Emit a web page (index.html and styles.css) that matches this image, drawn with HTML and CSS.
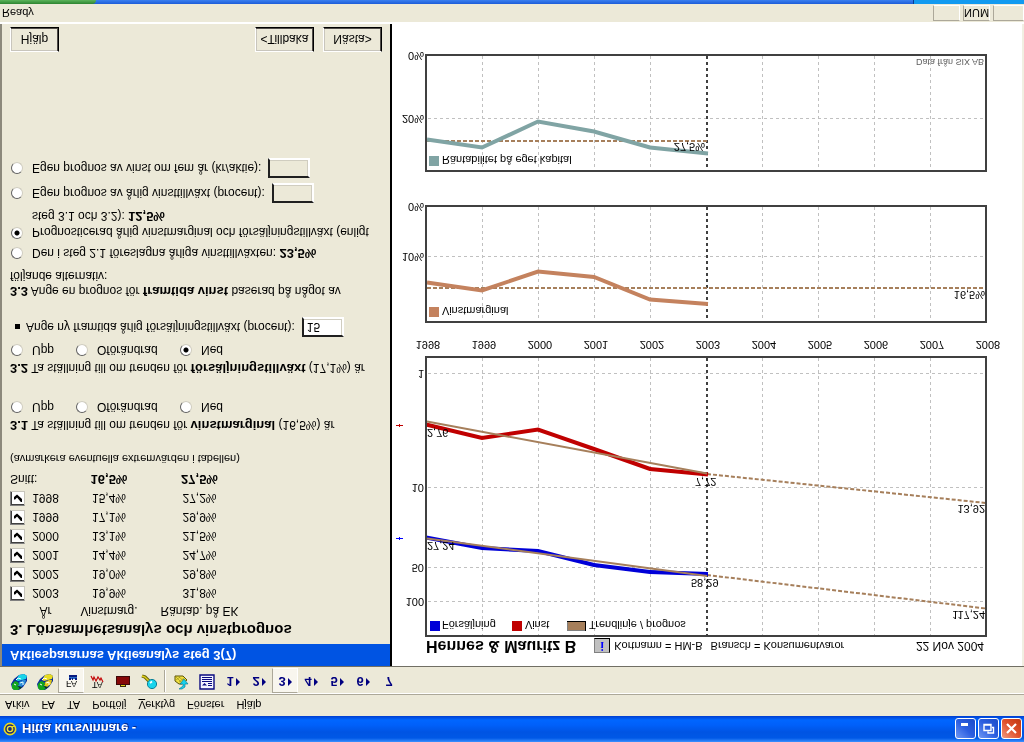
FILE: index.html
```html
<!DOCTYPE html>
<html lang="sv">
<head>
<meta charset="utf-8">
<title>Hitta kursvinnare</title>
<link rel="stylesheet" href="styles.css">
</head>
<body>
<div class="window">
  <header class="titlebar">
    <svg class="app-icon" viewBox="0 0 14 14" width="14" height="14" aria-hidden="true">
      <circle cx="7" cy="7" r="5.6" fill="#1a2a70" stroke="#e8d820" stroke-width="1.6"/>
      <circle cx="7" cy="7" r="2.6" fill="none" stroke="#f4e838" stroke-width="1.4"/>
      <path d="M9.5 5v4.5h3" fill="none" stroke="#e8d820" stroke-width="1.2"/>
    </svg>
    <h1 class="title">Hitta kursvinnare -</h1>
    <div class="window-buttons">
      <button class="winbtn" aria-label="Minimera"><svg viewBox="0 0 17 17"><path d="M4 11h7v3H4z" fill="#fff"/></svg></button>
      <button class="winbtn" aria-label="Återställ"><svg viewBox="0 0 17 17"><path d="M4 6.500h7v6H4zM4 12h7M12 9.500h1.500V4H8v1.500" fill="none" stroke="#fff" stroke-width="1.4"/></svg></button>
      <button class="winbtn close" aria-label="Stäng"><svg viewBox="0 0 17 17"><path d="M4 4l9 9M13 4l-9 9" stroke="#fff" stroke-width="2.2"/></svg></button>
    </div>
  </header>

  <nav class="menubar">
    <a href="#arkiv">Arkiv</a><a href="#fa">FA</a><a href="#ta">TA</a><a href="#portfolj">Portfölj</a><a href="#verktyg"><u>V</u>erktyg</a><a href="#fonster">Fönster</a><a href="#hjalp">Hjälp</a>
  </nav>

  <div class="toolbar">
    <button class="tool" aria-label="Hämta kurser"><svg viewBox="0 0 16 16">
      <path d="M3 16H8L12 13 16 7V2L13 0 8 1 3 5 0 10 1 14z" transform="matrix(1 0 0 -1 0 16)" fill="#0a2c9c"/>
      <path d="M8 15l5 1 3-2-1-3-4-1-4-1-2 1z" fill="#19d4e8"/>
      <path d="M12 10h3l-1-4-4-3-3 1 1 4z" fill="#2a8cd8"/>
      <path d="M1 6l3 3 3-1 1-3-2-1 3-2-2-2H3L1 2z" fill="#12a51c"/>
      <path d="M9 7l3 1V5M5 10l2 2 3-1M3 6l2-1" stroke="#e8ffff" fill="none"/>
      <path d="M7 4l4-1-2-2z" fill="#063c14"/>
    </svg></button>
    <button class="tool" aria-label="Hämta nyheter"><svg viewBox="0 0 16 16">
      <path d="M3 16H8L12 13 16 7V2L13 0 8 1 3 5 0 10 1 14z" transform="matrix(1 0 0 -1 0 16)" fill="#0a2c9c"/>
      <path d="M8 15l5 1 3-2-1-3-4-1-4-1-2 1z" fill="#e8dc20"/>
      <path d="M12 10h3l-1-4-4-3-3 1 1 4z" fill="#e0c818"/>
      <path d="M1 6l3 3 3-1 1-3-2-1 3-2-2-2H3L1 2z" fill="#12a51c"/>
      <path d="M9 7l3 1V5M5 10l2 2 3-1M3 6l2-1" stroke="#fffff0" fill="none"/>
      <path d="M7 4l4-1-2-2z" fill="#063c14"/>
    </svg></button>
    <button class="tool pressed" aria-label="FA"><svg viewBox="0 0 16 16">
      <text class="icon-text" x="3" y="9">FA</text>
      <path d="M6 11h8v4H6z" fill="#2a6cc8"/><path d="M6 13h8v2H6z" fill="#0a1c80"/><path d="M6 10h2v2H6zM9 10h1v2H9zM12 10h2v2h-2z" fill="#0a1c80"/>
    </svg></button>
    <button class="tool" aria-label="TA"><svg viewBox="0 0 16 16">
      <text class="icon-text" x="3" y="8">TA</text>
      <path d="M2 14l2-4 1 3 2-4 2 4 2-3 1 2 2-4" fill="none" stroke="#c40a0a" stroke-width="1.2"/>
    </svg></button>
    <button class="tool" aria-label="Bildskärm"><svg viewBox="0 0 16 16">
      <path d="M5 3h6v3H5z" fill="#3a2a08"/><path d="M6 4h4v1H6z" fill="#e2d21a"/>
      <path d="M1 5h14v9H1z" fill="#3c0a0a"/><path d="M2 6h12v7H2z" fill="#860808"/>
    </svg></button>
    <button class="tool" aria-label="Sök"><svg viewBox="0 0 16 16">
      <path d="M1 14l3-1 4-4" fill="none" stroke="#6a6410" stroke-width="3.4"/>
      <path d="M1 14l3-1 4-4" fill="none" stroke="#e2d21a" stroke-width="1.4"/>
      <circle cx="11" cy="6" r="4.6" fill="#18d4ec" stroke="#0a8098"/><path d="M9 7l2 1.500" stroke="#fff" stroke-width="1.6"/>
    </svg></button>
    <span class="tool-divider"></span>
    <button class="tool" aria-label="Anteckning"><svg viewBox="0 0 16 16">
      <path d="M2 14h8l4-4-5-4H6l-4 3z" fill="#f0e040" stroke="#5c5408"/>
      <path d="M3 13l6-6M6 13l6-5M3 10l4 3M6 8l5 4" stroke="#8e861c" stroke-width=".6"/>
      <path d="M6 1h3l3 2v3h3l-4 5-4-5h3V4z" fill="#18d0ec" stroke="#04708a" stroke-width=".6"/>
    </svg></button>
    <button class="tool" aria-label="Lista"><svg viewBox="0 0 16 16">
      <path d="M1 1h14v14H1z" fill="#f4f4ff" stroke="#0a0a80" stroke-width="1.4"/>
      <path d="M3 12.500h10M3 10.500h10M3 8.500h10M9 6.500h4M9 4.500h4" stroke="#0a0a80"/>
      <path d="M3 4.500h5L5.500 7z" fill="#0a0a80"/>
    </svg></button>
    <button class="tool step">1<i></i></button>
    <button class="tool step">2<i></i></button>
    <button class="tool step pressed">3<i></i></button>
    <button class="tool step">4<i></i></button>
    <button class="tool step">5<i></i></button>
    <button class="tool step">6<i></i></button>
    <button class="tool step">7</button>
  </div>

  <main class="workspace">
    <form class="panel">
      <h2 class="panel-title">Aktiespararnas Aktieanalys steg 3(7)</h2>
      <div class="panel-body">
        <h3 class="heading">3. Lönsamhetsanalys och vinstprognos</h3>
        <table class="years">
          <colgroup><col class="c-check"><col class="c-year"><col class="c-margin"><col class="c-return"></colgroup>
          <thead><tr><td></td><th>År</th><th>Vinstmarg.</th><th>Räntab. på EK</th></tr></thead>
          <tbody>
            <tr><td><input type="checkbox" class="check" id="y03" checked></td><td><label for="y03">2003</label></td><td>19,9%</td><td>31,8%</td></tr>
            <tr><td><input type="checkbox" class="check" id="y02" checked></td><td><label for="y02">2002</label></td><td>19,0%</td><td>29,8%</td></tr>
            <tr><td><input type="checkbox" class="check" id="y01" checked></td><td><label for="y01">2001</label></td><td>14,4%</td><td>24,7%</td></tr>
            <tr><td><input type="checkbox" class="check" id="y00" checked></td><td><label for="y00">2000</label></td><td>13,1%</td><td>21,5%</td></tr>
            <tr><td><input type="checkbox" class="check" id="y99" checked></td><td><label for="y99">1999</label></td><td>17,1%</td><td>29,9%</td></tr>
            <tr><td><input type="checkbox" class="check" id="y98" checked></td><td><label for="y98">1998</label></td><td>15,4%</td><td>27,2%</td></tr>
          </tbody>
          <tfoot><tr><td colspan="2" class="avg">Snitt:</td><td><b>16,5%</b></td><td><b>27,5%</b></td></tr></tfoot>
        </table>
        <p class="note">(avmarkera eventuella extremvärden i tabellen)</p>

        <p class="question q1"><b>3.1</b> Ta ställning till om trenden för <b>vinstmarginal</b> (16,5%) är</p>
        <div class="options">
          <label><input type="radio" class="radio" name="marginal">Upp</label>
          <label><input type="radio" class="radio" name="marginal">Oförändrad</label>
          <label><input type="radio" class="radio" name="marginal">Ned</label>
        </div>
        <p class="question q2"><b>3.2</b> Ta ställning till om trenden för <b>försäljningstillväxt</b> (17,1%) är</p>
        <div class="options">
          <label><input type="radio" class="radio" name="sales">Upp</label>
          <label><input type="radio" class="radio" name="sales">Oförändrad</label>
          <label><input type="radio" class="radio" name="sales" checked>Ned</label>
        </div>
        <div class="field growth"><span class="bullet"></span><label for="growth">Ange ny framtida årlig försäljningstillväxt (procent):</label><input class="box filled" id="growth" type="text" value="15"></div>

        <p class="intro"><b>3.3</b> Ange en prognos för <b>framtida vinst</b> baserad på något av<br>följande alternativ:</p>
        <label class="choice"><input type="radio" class="radio" name="forecast"><span>Den i steg 2.1 föreslagna årliga vinsttillväxten: <b>23,5%</b></span></label>
        <label class="choice two-line"><input type="radio" class="radio" name="forecast" checked><span>Prognosticerad årlig vinstmarginal och försäljningstillväxt (enligt<br>steg 3.1 och 3.2): <b>12,5%</b></span></label>
        <div class="field"><input type="radio" class="radio" name="forecast" id="own-growth"><label for="own-growth">Egen prognos av årlig vinsttillväxt (procent):</label><input class="box" type="text" aria-label="Årlig vinsttillväxt i procent"></div>
        <div class="field"><input type="radio" class="radio" name="forecast" id="own-profit"><label for="own-profit">Egen prognos av vinst om fem år (kr/aktie):</label><input class="box" type="text" aria-label="Vinst om fem år"></div>

        <div class="actions">
          <button type="button" class="push help">Hjälp</button>
          <button type="button" class="push">&lt;Tillbaka</button>
          <button type="button" class="push">Nästa&gt;</button>
        </div>
      </div>
    </form>

    <section class="chart-pane">
      <div class="chart-header">
        <h2 class="company">Hennes &amp; Mauritz B</h2>
        <button class="info" aria-label="Information">i</button>
        <span class="meta">Kortnamn = HM-B</span>
        <span class="meta">Bransch = Konsumentvaror</span>
        <span class="date">22 Nov 2004</span>
      </div>
      <svg class="charts" viewBox="392 105 632 613" role="img" aria-label="Försäljning, vinst, vinstmarginal och räntabilitet 1998–2008">
        <g class="grid">
          <path d="M428 368.500H985M428 254.500H985M428 174.500H985M428 140.500H985M428 485.500H985M428 623.500H985"/>
          <path d="M482.500 384V107M538.500 384V107M594.500 384V107M650.500 384V107M762.500 384V107M818.500 384V107M874.500 384V107M930.500 384V107"/>
          <path d="M482.500 535V421M538.500 535V421M594.500 535V421M650.500 535V421M762.500 535V421M818.500 535V421M874.500 535V421M930.500 535V421"/>
          <path d="M482.500 686V572M538.500 686V572M594.500 686V572M650.500 686V572M762.500 686V572M818.500 686V572M874.500 686V572M930.500 686V572"/>
        </g>
        <path class="today" d="M707 384V107M707 535V421M707 686V572"/>
        <path class="forecast" d="M707 268L986 239M707 167L986 133.500"/>
        <path class="average" d="M427 454H985M427 601H707"/>
        <polyline class="sales" points="426,204.500 482,194 538,191 594,177 650,170 708,168"/>
        <polyline class="profit" points="426,317.500 482,304 538,312.500 594,293 650,273 708,267.500"/>
        <path class="trend" d="M427 320.500L707 268.500M427 203.500L707 166"/>
        <polyline class="margin" points="427,459.500 482,451.500 538,470.500 594,465 650,442.500 708,438"/>
        <polyline class="return" points="427,602.500 482,594.500 538,620.500 594,610.500 650,594.500 708,588.500"/>
        <g class="frame">
          <rect x="426" y="106" width="560" height="279"/>
          <rect x="426" y="420" width="560" height="116"/>
          <rect x="426" y="571" width="560" height="116"/>
        </g>
        <path class="mark-profit" d="M396 316.500h7M399.500 315v3"/>
        <path class="mark-sales" d="M396 203.500h7M399.500 202v3"/>
        <g class="axis">
          <text x="424" y="144">100</text><text x="424" y="178">50</text><text x="424" y="258">10</text><text x="424" y="372">1</text>
          <text x="424" y="489">10%</text><text x="424" y="539">0%</text><text x="424" y="627">20%</text><text x="424" y="690">0%</text>
          <text x="985" y="131">117,24</text><text x="985" y="237">13,92</text><text x="985" y="451">16,5%</text><text x="705" y="599">27,5%</text>
        </g>
        <g class="values">
          <text x="427" y="313">2,76</text><text x="695" y="264">7,72</text><text x="427" y="200">27,24</text><text x="691" y="163">58,29</text>
        </g>
        <g class="year-labels">
          <text x="428" y="401">1998</text><text x="484" y="401">1999</text><text x="540" y="401">2000</text><text x="596" y="401">2001</text><text x="652" y="401">2002</text><text x="708" y="401">2003</text><text x="764" y="401">2004</text><text x="820" y="401">2005</text><text x="876" y="401">2006</text><text x="932" y="401">2007</text><text x="988" y="401">2008</text>
        </g>
        <g class="legend">
          <rect x="430" y="111" width="10" height="10" fill="#0000d8"/><text x="442" y="121">Försäljning</text>
          <rect x="512" y="111" width="10" height="10" fill="#c00000"/><text x="525" y="121">Vinst</text>
          <rect x="567" y="111" width="19" height="10" fill="#000"/><rect x="567" y="111" width="18" height="9" fill="#808080"/><rect x="568" y="112" width="17" height="8" fill="#a67f5b"/><text x="589" y="121">Trendlinje / prognos</text>
          <rect x="429" y="425" width="10" height="10" fill="#c4825e"/><text x="442" y="435">Vinstmarginal</text>
          <rect x="429" y="576" width="10" height="10" fill="#80a4a4"/><text x="442" y="586">Räntabilitet på eget kapital</text>
        </g>
        <text class="source" x="984" y="683">Data från SIX AB</text>
      </svg>
    </section>
  </main>

  <footer class="statusbar">
    <span class="ready">Ready</span>
    <span class="cell"></span><span class="cell">NUM</span><span class="cell last"></span>
  </footer>
  <div class="taskbar"><span class="start"></span><span class="tray"></span></div>
</div>
</body>
</html>
```
FILE: styles.css
```css
* { box-sizing: border-box; }
html, body { margin: 0; padding: 0; }
body { font-family: "Liberation Sans", Arial, sans-serif; font-size: 12px; color: #000; background: #ece9d8; overflow: hidden; }
button, input { font: inherit; color: inherit; }
h1, h2, h3, p { margin: 0; }

/* the whole window is shown upside down */
.window { display: flex; flex-direction: column; min-height: 100vh; transform: scaleY(-1); }

.titlebar { display: flex; align-items: center; height: 26px; padding: 0 2px 0 3px; background: linear-gradient(#3c94ff 0, #2a80f8 1px, #0058e6 4px, #0054e3 10px, #0060fa 17px, #0066ff 22px, #003ed0 26px); }
.title { flex: 1; margin-left: 5px; font-size: 13px; font-weight: bold; color: #fff; text-shadow: 1px 1px #0a2a8c; }
.window-buttons { display: flex; gap: 2px; }
.winbtn { width: 21px; height: 21px; padding: 0; border: 1px solid #fff; border-radius: 3px; background: linear-gradient(135deg, #6f98f4, #2c5ee0 50%, #1c4cc8); }
.winbtn svg { display: block; width: 17px; height: 17px; margin: 1px; }
.close { background: linear-gradient(135deg, #f09a80, #e0502c 50%, #c03810); }

.menubar { display: flex; gap: 12px; height: 22px; padding: 0 5px; align-items: center; border-bottom: 1px solid #aca899; font-size: 11px; line-height: 20px; background: #ece9d8; }
.menubar a { color: #000; text-decoration: none; }

.toolbar { display: flex; height: 27px; padding-left: 6px; align-items: flex-start; border-top: 1px solid #fff; }
.tool { display: flex; flex: none; align-items: center; justify-content: center; width: 26px; height: 25px; padding: 0 0 3px; border: 1px solid transparent; background: none; }
.tool svg { width: 16px; height: 16px; }
.pressed { border-color: #aca899 #fff #fff #aca899; background: #f8f6ee; }
.tool-divider { width: 2px; height: 22px; margin: 1px 2px; border-left: 1px solid #aca899; border-right: 1px solid #fff; }
.icon-text { font-size: 9px; fill: #000; }
.step { gap: 2px; font-size: 13px; font-weight: bold; color: #000080; }
.step i { border-left: 4px solid #000080; border-top: 4px solid transparent; border-bottom: 4px solid transparent; }

.workspace { display: flex; flex: 1; border-top: 1px solid #716f64; }
.panel { display: flex; flex: none; flex-direction: column; width: 392px; border-left: 2px solid #8c897c; border-right: 2px solid #000; background: #ece9d8; white-space: nowrap; }
.panel-title { height: 22px; padding-left: 8px; font-size: 13px; line-height: 22px; color: #fff; background: #0054e3; }
.panel-body { display: flex; flex: 1; flex-direction: column; padding: 4px 8px 3px; }
.panel-body b { font-size: 13px; }
.panel-body .heading { font-size: 15px; line-height: 20px; }
.years { width: 232px; border-collapse: collapse; table-layout: fixed; text-align: center; }
.c-check { width: 20px; }
.c-year { width: 31px; }
.c-margin { width: 96px; }
.c-return { width: 85px; }
.years td, .years th { height: 19px; padding: 0; font-weight: normal; line-height: 16px; }
.years thead td, .years thead th { height: 17px; }
.years tfoot td { height: 20px; }
.years .avg { text-align: left; }
.check { display: block; appearance: none; width: 15px; height: 15px; margin: 0; border: 1px solid; border-color: #808080 #c8c6bc #c8c6bc #808080; background: #fff; box-shadow: inset 1px 1px #404040; }
.check:checked::before { content: ""; display: block; width: 8px; height: 8px; margin: 3px; background: #000; clip-path: polygon(0 30%, 14% 30%, 38% 55%, 86% 0, 100% 0, 100% 36%, 38% 95%, 0 62%); }
.note { font-size: 11px; line-height: 20px; }
.question { line-height: 18px; }
.q1 { margin-top: 15px; }
.q2 { margin-top: 21px; }
.options { display: grid; grid-template-columns: 65px 104px auto; line-height: 18px; }
.options label { display: flex; align-items: center; }
.radio { flex: none; appearance: none; width: 12px; height: 12px; margin: 0 9px 0 1px; border: 1px solid; border-color: #606060 #d0cdc0 #d0cdc0 #606060; border-radius: 50%; background: #fff; }
.radio:checked { background: radial-gradient(circle, #000 2px, #fff 3px); }
.field { display: flex; align-items: center; height: 20px; margin-top: 5px; }
.growth { margin-top: 4px; }
.bullet { width: 5px; height: 5px; margin: 0 6px 0 5px; background: #000; }
.box { width: 42px; height: 20px; margin-left: 7px; padding: 0 3px; border: 2px solid; border-color: #202020 #fff #fff #202020; background: #ece9d8; box-shadow: inset -1px -1px #d0cdc0; }
.filled { background: #fff; }
.intro { margin-top: 18px; line-height: 15px; }
.choice { display: flex; align-items: center; margin-top: 6px; line-height: 18px; }
.two-line { align-items: flex-start; margin-top: 5px; line-height: 15px; }
.actions { display: flex; gap: 9px; margin-top: auto; }
.push { width: 59px; height: 25px; padding: 0; border: 1px solid; border-color: #fff #000 #000 #fff; background: #ece9d8; box-shadow: inset -1px -1px #504c48, inset 1px 1px #c8c5bc; }
.help { width: 49px; margin-right: auto; }

.chart-pane { display: flex; flex: 1; flex-direction: column; min-width: 0; background: linear-gradient(to left, #f1efe2 2px, #fff 2px); }
.chart-header { display: flex; align-items: center; height: 29px; padding: 11px 40px 0 34px; white-space: nowrap; }
.company { font-size: 16px; line-height: 18px; }
.info { width: 16px; height: 15px; margin: 0 4px 0 18px; padding: 0; border: 1px solid; border-color: #808080 #000 #000 #808080; background: #c0c0c0; font: bold 12px/12px "Liberation Serif", serif; color: #0000ff; }
.meta { margin-right: 8px; font-size: 11px; }
.date { margin-left: auto; }
.charts { display: block; width: 100%; font-size: 11px; }
.charts path, .charts polyline { fill: none; }
.grid { stroke: #c0c0c0; stroke-dasharray: 3 3; }
.today { stroke: #404040; stroke-width: 2; stroke-dasharray: 3 3; }
.forecast { stroke: #a67f5b; stroke-width: 2; stroke-dasharray: 4 2; }
.average { stroke: #a67f5b; stroke-width: 2; stroke-dasharray: 4 2; }
.sales { stroke: #0000d8; stroke-width: 4; }
.profit { stroke: #c00000; stroke-width: 4; }
.trend { stroke: #a67f5b; stroke-width: 2; }
.margin { stroke: #c4825e; stroke-width: 4; }
.return { stroke: #80a4a4; stroke-width: 4; }
.frame { fill: none; stroke: #404040; stroke-width: 2; }
.mark-profit { stroke: #c00000; }
.mark-sales { stroke: #0000ff; }
.axis { text-anchor: end; }
.year-labels { text-anchor: middle; }
.source { font-size: 9px; text-anchor: end; fill: #606060; }

.statusbar { display: flex; align-items: center; gap: 3px; height: 20px; border-top: 2px solid #fff; font-size: 11px; }
.ready { flex: 1; padding-left: 2px; }
.cell { width: 27px; height: 16px; border: 1px solid; border-color: #aca899 #fff #fff #aca899; line-height: 14px; text-align: center; }
.last { width: 31px; }
.taskbar { display: flex; justify-content: space-between; height: 4px; background: linear-gradient(#1c5cd8, #3a80f0); }
.start { width: 96px; background: linear-gradient(#2c8430, #5cb45c); border-radius: 0 4px 0 0; }
.tray { width: 111px; background: #129af0; border-left: 1px solid #083c90; }
```
